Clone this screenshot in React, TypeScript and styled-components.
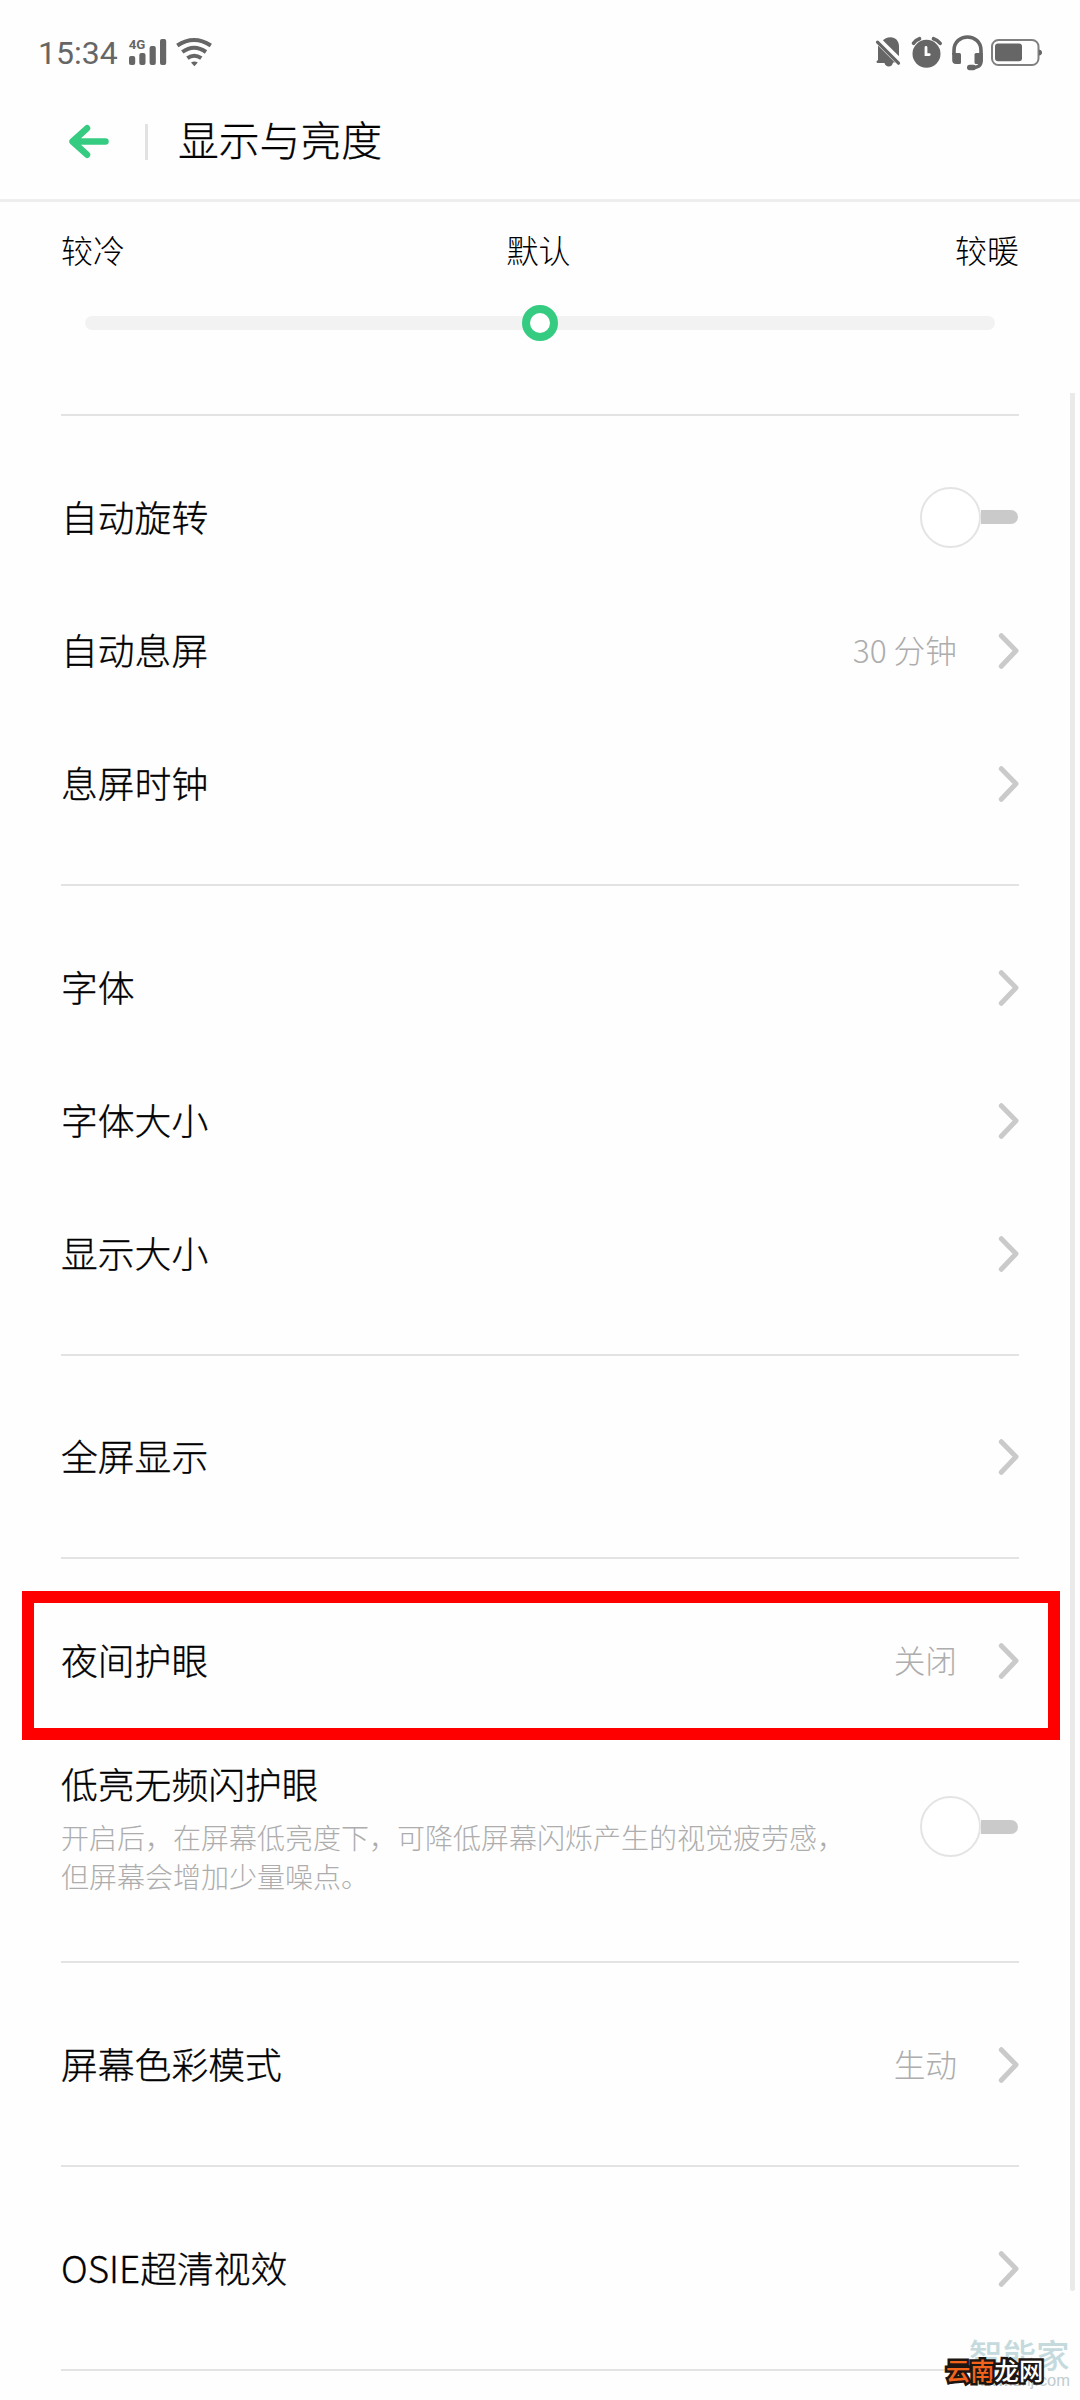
import React from "react";
import styled, { createGlobalStyle } from "styled-components";

const GlobalStyle = createGlobalStyle`
  *, *::before, *::after { box-sizing: border-box; }
  body { margin: 0; background: #fefefe; }
`;

const Screen = styled.main`
  position: relative;
  width: 1080px;
  height: 2400px;
  overflow: hidden;
  display: flex;
  flex-direction: column;
  background: #fefefe;
  color: #000;
  font-family: "Noto Sans CJK SC", sans-serif;
  font-weight: 300;
`;

const StatusBar = styled.div`
  flex: none;
  height: 104px;
  padding: 0 37px 0 38px;
  display: flex;
  align-items: center;
  justify-content: space-between;
`;

const StatusGroup = styled.div<{ $gap: number }>`
  display: flex;
  align-items: center;
  gap: ${(p) => p.$gap}px;
  svg { display: block; flex: none; overflow: visible; }
`;

const Clock = styled.span`
  width: 81px;
  font: 400 32px/40px Roboto, sans-serif;
  color: #666;
  padding-top: 2px;
`;

const Header = styled.header`
  flex: none;
  height: 98px;
  padding: 0 68px 20px;
  display: flex;
  align-items: center;
  border-bottom: 3px solid #eee;
`;

const BackButton = styled.button`
  width: 42px;
  height: 36px;
  padding: 0;
  border: 0;
  background: none;
  svg { display: block; }
`;

const HeaderRule = styled.span`
  width: 3px;
  height: 36px;
  margin: 0 30px 0 35px;
  background: #e2e2e2;
`;

const Title = styled.h1`
  margin: 0;
  padding-bottom: 5px;
  font-size: 40.8px;
  line-height: 60px;
  font-weight: 300;
  -webkit-text-stroke: 0.3px #000;
`;

const TemperaturePanel = styled.section`
  flex: none;
  height: 212px;
  padding: 23px 61px 0;
`;

const TemperatureLabels = styled.div`
  display: grid;
  grid-template-columns: 1fr auto 1fr;
  font-size: 32px;
  line-height: 48px;
  span:nth-child(2) { padding-right: 3px; }
  span:last-child { text-align: right; }
`;

const Track = styled.div`
  display: flex;
  align-items: center;
  justify-content: center;
  height: 14px;
  margin: 43px 24px 0;
  border-radius: 7px;
  background: #f2f2f2;
`;

const Thumb = styled.span`
  flex: none;
  width: 36px;
  height: 36px;
  border: 8px solid #35cb81;
  border-radius: 50%;
  background: #fff;
`;

const Group = styled.section<{ $pad?: number }>`
  flex: none;
  margin: 0 61px;
  padding: ${(p) => p.$pad ?? 34.5}px 0;
  border-top: 2px solid #e3e3e3;
`;

const Row = styled.div<{ $tall?: boolean }>`
  height: ${(p) => (p.$tall ? 200 : 133)}px;
  display: flex;
  align-items: center;
  justify-content: space-between;
`;

const RowLabel = styled.span`
  padding-bottom: 3px;
  font-size: 36.8px;
  line-height: 54px;
  white-space: nowrap;
  -webkit-text-stroke: 0.3px #000;
`;

const RowEnd = styled.div`
  display: flex;
  align-items: center;
  gap: 41px;
  svg { display: block; flex: none; }
`;

const Value = styled.span`
  padding-bottom: 2px;
  font-size: 31.7px;
  line-height: 48px;
  color: #adadad;
`;

const LabelStack = styled.div`
  display: flex;
  flex-direction: column;
  gap: 5px;
  padding-bottom: 2px;
`;

const Description = styled.p`
  margin: 0;
  font-size: 28px;
  line-height: 39px;
  color: #adadad;
  white-space: nowrap;
`;

const Switch = styled.span`
  display: flex;
  align-items: center;
  margin-right: 1px;
  &::before {
    content: "";
    width: 61px;
    height: 61px;
    border: 2px solid #e4e4e4;
    border-radius: 50%;
    background: #fff;
  }
  &::after {
    content: "";
    width: 37px;
    height: 14px;
    border-radius: 0 7px 7px 0;
    background: #cacaca;
  }
`;

const Highlight = styled.div`
  position: absolute;
  left: 22px;
  top: 1591px;
  width: 1038px;
  height: 149px;
  border: 12px solid #fe0000;
`;

const Scrollbar = styled.div`
  position: absolute;
  left: 1070px;
  top: 393px;
  width: 5px;
  height: 1898px;
  border-radius: 0 0 3px 3px;
  background: #eaeaea;
`;

const SiteMark = styled.div`
  position: absolute;
  left: 969px;
  top: 2335px;
  width: 101px;
  color: #c5dadd;
  font-weight: 500;
  font-size: 33.5px;
  line-height: 38px;
  white-space: nowrap;
`;

const SiteUrl = styled.div`
  margin-top: -3px;
  display: flex;
  justify-content: flex-end;
  font: 400 16.5px/20px "Liberation Sans", sans-serif;
  color: #c0ccd0;
`;

const Stamp = styled.div`
  position: absolute;
  left: 946px;
  top: 2352px;
  font-size: 24.3px;
  line-height: 36px;
  font-weight: 500;
  color: #fff;
  -webkit-text-stroke: 5px #1c1512;
  paint-order: stroke fill;
  white-space: nowrap;
  b { font-weight: 500; color: #f2631c; }
`;

const Chevron = () => (
  <svg width="21" height="37" viewBox="0 0 21 37" fill="none" stroke="#cacaca" strokeWidth="5" strokeLinecap="round" strokeLinejoin="round">
    <path d="M3.3 3.700 18 18.800 3.300 34.300" />
  </svg>
);

const Signal = () => (
  <svg width="37" height="28" viewBox="129 38 37 28" fill="#666">
    <text x="128.8" y="49" fontFamily="Roboto, sans-serif" fontWeight="700" fontSize="13.2">4G</text>
    <rect x="129" y="56" width="6.2" height="9" rx="2" />
    <rect x="139.3" y="53" width="6.2" height="12" rx="2" />
    <rect x="149.6" y="46" width="6.2" height="19" rx="2" />
    <rect x="160" y="39" width="6.2" height="26" rx="2" />
  </svg>
);

const Wifi = () => (
  <svg width="36" height="30" viewBox="176 37 36 30" fill="none" stroke="#666" strokeWidth="4">
    <path d="M177.3 45.5Q194 34.5 210.8 45.5" />
    <path d="M182.3 52Q194 43.5 206 52" />
    <path d="M187.4 58.2Q194.2 53.4 201.3 58.2" />
    <path d="M191 62.6Q194.3 60.5 197.8 62.6L194.4 66.3Z" fill="#666" stroke="none" />
  </svg>
);

const Muted = () => (
  <svg width="27" height="32" viewBox="875 36 27 32" fill="#666">
    <path d="M882 41.5C884.5 38.5 887 37.2 890.5 37.2 895.5 37.2 899 41 899 46.5V56.5Z" />
    <path d="M878 45.5 895 62.5H893C892.5 65.2 891 66.5 888.8 66.5 886.5 66.5 885 65.2 884.5 63H878C876.2 63 876 60.6 878 60.2Z" />
    <path d="M877.5 42.2 898.5 63.2" stroke="#666" strokeWidth="3.2" strokeLinecap="round" />
    <path d="M880.3 39.2 900.5 59.4" stroke="#fefefe" strokeWidth="2.2" />
  </svg>
);

const Alarm = () => (
  <svg width="32" height="34" viewBox="911 34 32 34" fill="none" stroke="#666" strokeLinecap="round">
    <circle cx="926.5" cy="52.8" r="14" fill="#666" stroke="none" />
    <path d="M913.5 42.3Q915.5 39 919.500 37.7M933.5 37.7Q937.5 39 940.2 42.3" strokeWidth="3.6" />
    <path d="M926 46.5V53.6H929.3" stroke="#fefefe" strokeWidth="2.8" />
  </svg>
);

const Headset = () => (
  <svg width="31" height="37" viewBox="952 33 31 37" fill="none" stroke="#666" strokeWidth="3.6">
    <path d="M954 54V49.5C954 31.5 981 31.5 981 49.5V60C981 65 978 66.7 971 66.7" />
    <path d="M952.2 52H959.5Q961 52 961 53.5V61.5Q961 63 959.5 63H956Q952.2 63 952.2 59Z" fill="#666" stroke="none" />
    <path d="M982.8 52H976Q974.5 52 974.5 53.5V61.5Q974.5 63 976 63H979Q982.8 63 982.8 59Z" fill="#666" stroke="none" />
    <rect x="967" y="63.8" width="9" height="5.4" rx="2.7" fill="#666" stroke="none" />
  </svg>
);

const Battery = () => (
  <svg width="51" height="28" viewBox="992 37 51 28" fill="#666">
    <rect x="992" y="39" width="46.5" height="25" rx="6.5" fill="none" stroke="#808080" strokeWidth="2" />
    <rect x="995" y="42.5" width="27" height="17.8" rx="3" />
    <path d="M1039 48.5Q1042 49 1042 51.5T1039 54.5Z" />
  </svg>
);

type Item = { label: string; value?: string; toggle?: boolean; note?: string[] };

const groups: { pad?: number; items: Item[] }[] = [
  { items: [{ label: "自动旋转", toggle: true }, { label: "自动息屏", value: "30 分钟" }, { label: "息屏时钟" }] },
  { items: [{ label: "字体" }, { label: "字体大小" }, { label: "显示大小" }] },
  { pad: 34, items: [{ label: "全屏显示" }] },
  {
    items: [
      { label: "夜间护眼", value: "关闭" },
      {
        label: "低亮无频闪护眼",
        toggle: true,
        note: ["开启后，在屏幕低亮度下，可降低屏幕闪烁产生的视觉疲劳感，", "但屏幕会增加少量噪点。"],
      },
    ],
  },
  { items: [{ label: "屏幕色彩模式", value: "生动" }] },
  { items: [{ label: "OSIE超清视效" }] },
  { items: [] },
];

const SettingRow = ({ label, value, toggle, note }: Item) => (
  <Row $tall={!!note}>
    {note ? (
      <LabelStack>
        <RowLabel>{label}</RowLabel>
        <Description>
          {note[0]}
          <br />
          {note[1]}
        </Description>
      </LabelStack>
    ) : (
      <RowLabel>{label}</RowLabel>
    )}
    <RowEnd>
      {value && <Value>{value}</Value>}
      {toggle ? <Switch /> : <Chevron />}
    </RowEnd>
  </Row>
);

export default function App() {
  return (
    <Screen>
      <GlobalStyle />
      <StatusBar>
        <StatusGroup $gap={10}>
          <Clock>15:34</Clock>
          <Signal />
          <Wifi />
        </StatusGroup>
        <StatusGroup $gap={9}>
          <Muted />
          <Alarm />
          <Headset />
          <Battery />
        </StatusGroup>
      </StatusBar>
      <Header>
        <BackButton aria-label="返回">
          <svg width="42" height="36" viewBox="68 124 42 36" fill="none" stroke="#35cb81" strokeWidth="6.5" strokeLinecap="round" strokeLinejoin="round">
            <path d="M105.5 141.5H73M87 128.3 72.5 141.5 87 154.7" />
          </svg>
        </BackButton>
        <HeaderRule />
        <Title>显示与亮度</Title>
      </Header>
      <TemperaturePanel>
        <TemperatureLabels>
          <span>较冷</span>
          <span>默认</span>
          <span>较暖</span>
        </TemperatureLabels>
        <Track>
          <Thumb />
        </Track>
      </TemperaturePanel>
      {groups.map((g, i) => (
        <Group key={i} $pad={g.pad}>
          {g.items.map((item) => (
            <SettingRow key={item.label} {...item} />
          ))}
        </Group>
      ))}
      <Highlight />
      <Scrollbar />
      <SiteMark>
        智能家
        <SiteUrl>www.znj.com</SiteUrl>
      </SiteMark>
      <Stamp>
        <b>云南</b>龙网
      </Stamp>
    </Screen>
  );
}
